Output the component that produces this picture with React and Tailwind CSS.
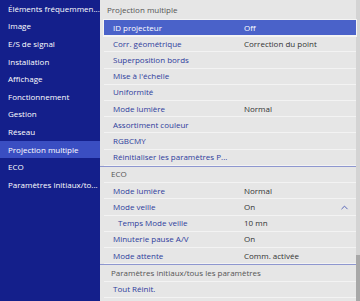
import { ChevronUp } from "lucide-react";

const menu = [
  "Éléments fréquemmen...",
  "Image",
  "E/S de signal",
  "Installation",
  "Affichage",
  "Fonctionnement",
  "Gestion",
  "Réseau",
  "Projection multiple",
  "ECO",
  "Paramètres initiaux/to...",
];

const sections = [
  {
    title: "Projection multiple",
    rows: [
      { label: "ID projecteur", value: "Off", active: true },
      { label: "Corr. géométrique", value: "Correction du point" },
      { label: "Superposition bords" },
      { label: "Mise à l'échelle" },
      { label: "Uniformité" },
      { label: "Mode lumière", value: "Normal" },
      { label: "Assortiment couleur" },
      { label: "RGBCMY" },
      { label: "Réinitialiser les paramètres P..." },
    ],
  },
  {
    title: "ECO",
    rows: [
      { label: "Mode lumière", value: "Normal" },
      { label: "Mode veille", value: "On", chevron: true },
      { label: "Temps Mode veille", value: "10 mn", sub: true },
      { label: "Minuterie pause A/V", value: "On" },
      { label: "Mode attente", value: "Comm. activée" },
    ],
  },
  {
    title: "Paramètres initiaux/tous les paramètres",
    rows: [{ label: "Tout Réinit." }],
  },
];

function Row({ row }) {
  return (
    <div
      className={
        "relative flex items-center h-[16.2px] ml-[4px] border-b " +
        (row.active
          ? "bg-[#4a62c9] border-[#f4f4f4] outline outline-1 outline-[#f4f4f4]"
          : "border-[#f3f3f3]")
      }
    >
      <span
        className={
          "w-[140px] shrink-0 whitespace-nowrap " +
          (row.sub ? "pl-[14px] " : "pl-[9px] ") +
          (row.active ? "text-white" : "text-[#2e3c9c]")
        }
      >
        {row.label}
      </span>
      {row.value && (
        <span className={"whitespace-nowrap " + (row.active ? "text-white" : "text-[#333]")}>
          {row.value}
        </span>
      )}
      {row.chevron && (
        <ChevronUp className="absolute right-[6px] w-[11px] h-[11px] text-[#4a5ab5]" strokeWidth={2} />
      )}
    </div>
  );
}

export default function App() {
  return (
    <div
      className="flex w-[360px] h-[301px] overflow-hidden text-[8px] leading-normal"
      style={{ fontFamily: '"Open Sans", "Noto Sans", sans-serif' }}
    >
      <div className="w-[100px] shrink-0 bg-[#141f8b] flex flex-col">
        {menu.map((m, i) => (
          <div
            key={i}
            className={
              "h-[17.6px] flex items-center pl-[8px] text-white whitespace-nowrap overflow-hidden " +
              (m === "Projection multiple" ? "bg-[#3a4ec2]" : "")
            }
          >
            {m}
          </div>
        ))}
      </div>
      <div className="flex-1 bg-[#e6e6e6] flex">
        <div className="flex-1 flex flex-col">
          {sections.map((s, i) => (
            <div key={i} className={i > 0 ? "border-t border-[#8e97cf]" : ""}>
              <div
                className={
                  "flex items-center pl-[7px] text-[#555] whitespace-nowrap " +
                  (i === 0 ? "h-[20px]" : "h-[16.6px] border-b border-[#f3f3f3] ml-[4px] pl-[3px]")
                }
              >
                {s.title}
              </div>
              {s.rows.map((r, j) => (
                <Row key={j} row={r} />
              ))}
            </div>
          ))}
        </div>
        <div className="w-[4px] bg-[#d4d4d4] flex flex-col justify-end">
          <div className="h-[46px] bg-[#a8a8a8]" />
        </div>
      </div>
    </div>
  );
}
